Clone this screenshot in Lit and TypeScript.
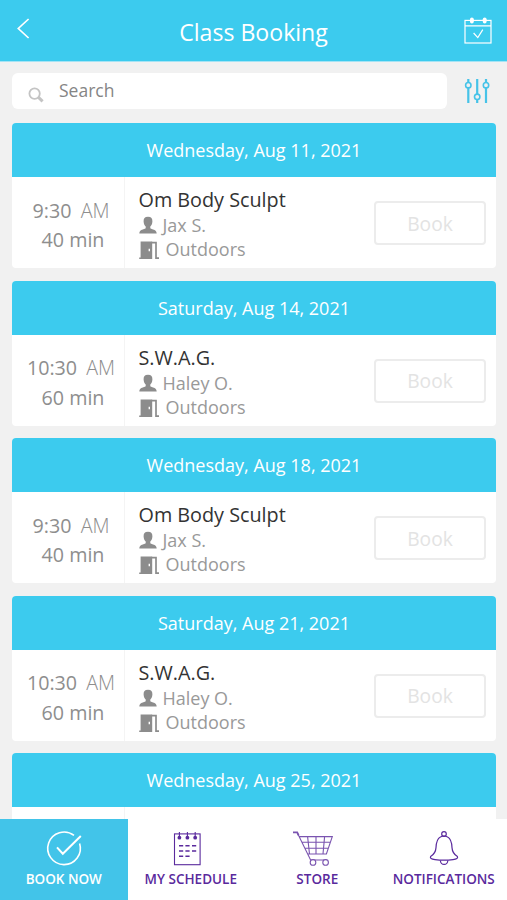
import { LitElement, html, css, svg, nothing } from "lit";
import { customElement, property } from "lit/decorators.js";
import { classMap } from "lit/directives/class-map.js";

interface Details {
  time: string;
  mins: number;
  title: string;
  coach: string;
}

interface Session {
  date: string;
  details?: Details;
}

const SCULPT: Details = { time: "9:30", mins: 40, title: "Om Body Sculpt", coach: "Jax S." };
const SWAG: Details = { time: "10:30", mins: 60, title: "S.W.A.G.", coach: "Haley O." };

const SESSIONS: Session[] = [
  { date: "Wednesday, Aug 11, 2021", details: SCULPT },
  { date: "Saturday, Aug 14, 2021", details: SWAG },
  { date: "Wednesday, Aug 18, 2021", details: SCULPT },
  { date: "Saturday, Aug 21, 2021", details: SWAG },
  { date: "Wednesday, Aug 25, 2021" },
];

const bookIcon = svg`<svg width="40" height="38" viewBox="0 0 40 38" fill="none" stroke="currentColor" stroke-width="1.6">
  <path d="M30 6.4A16.3 16.3 0 1 0 35.6 14.4"/><path d="M13 18.3L18.8 24.7L36.8 7" stroke-width="2"/></svg>`;

const scheduleIcon = svg`<svg class="nudge" width="40" height="38" viewBox="0 0 40 38" fill="none" stroke="currentColor" stroke-width="1.1">
  <rect x="7.5" y="4.9" width="25.6" height="30.8"/>
  <path d="M12.4 3v5M20.4 3v5M28.2 3v5"/>
  <g fill="currentColor" stroke="none"><circle cx="12.4" cy="8.7" r="1.9"/><circle cx="20.4" cy="8.7" r="1.9"/><circle cx="28.2" cy="8.7" r="1.9"/></g>
  <path stroke-width="1.4" d="M12 16.8h4.2M18.4 16.8h4.2M25 16.8h4.2M12 22h4.2M18.4 22h4.2M25 22h4.2M12 27.3h4.2M18.4 27.3h4.2"/></svg>`;

const storeIcon = svg`<svg class="nudge" width="42" height="38" viewBox="0 0 42 38" fill="none" stroke="currentColor" stroke-width="1.1" opacity=".8">
  <path stroke-width="1.8" d="M1 3.4h4.2l1.4 3"/>
  <path d="M5.4 4L18.6 31H35M7.6 7.6H40.3L34.4 25H16M10.3 13.2H38.5M13 19.2H36.5M15.6 7.6L17.5 25M24 7.6V25M32.6 7.6L31 25"/>
  <circle cx="21" cy="33.4" r="2.8" fill="#fff"/><circle cx="33.6" cy="33.4" r="2.8" fill="#fff"/></svg>`;

const bellIcon = svg`<svg width="40" height="38" viewBox="0 0 40 38" fill="none" stroke="currentColor" stroke-width="1.2">
  <circle cx="20" cy="5" r="2.3"/>
  <path d="M16.4 8Q20 6 23.6 8C27.4 10 27.8 14 28 18.6C28.3 23.4 30 25.4 33.4 27.6Q34.6 30 29 30.6Q20 31.8 11 30.6Q5.4 30 6.6 27.6C10 25.4 11.7 23.4 12 18.6C12.2 14 12.6 10 16.4 8Z"/>
  <path d="M16.4 31.4A3.7 4 0 0 0 23.8 31.4"/></svg>`;

const TABS = [
  { id: "book", label: "BOOK NOW", icon: bookIcon },
  { id: "schedule", label: "MY SCHEDULE", icon: scheduleIcon },
  { id: "store", label: "STORE", icon: storeIcon },
  { id: "notify", label: "NOTIFICATIONS", icon: bellIcon },
];

@customElement("session-card")
export class SessionCard extends LitElement {
  @property({ attribute: false }) session!: Session;

  static styles = css`
    :host { display: block; flex: none; height: 145px; border-radius: 4px; overflow: hidden; background: #fff; }
    .date { height: 54px; line-height: 54px; text-align: center; background: #3ccbee; color: #fff; font-size: 18px; }
    .body { display: flex; height: 91px; color: #8e8e8e; }
    .when { box-sizing: border-box; width: 113px; padding: 18.6px 0 0 6px; border-right: 1px solid #f4f4f4; text-align: center; font-size: 19.7px; line-height: 29.5px; white-space: nowrap; }
    .ampm { font-weight: 300; margin-left: 4px; }
    .mins { padding-left: 4px; }
    .what { flex: 1; padding: 9.2px 0 0 13.5px; }
    .title { color: #333; font-size: 19.8px; line-height: 27px; white-space: nowrap; }
    .line { display: flex; align-items: center; height: 24px; font-size: 18px; color: #999; }
    .line svg { flex: none; color: #8c8c8c; }
    .door { margin-top: 2px; }
    .coach { margin-left: 6px; }
    .place { margin-left: 7px; }
    .book { box-sizing: border-box; width: 112px; height: 44px; margin: 24px 10px 0 0; padding: 0; border: 2px solid #ececec; border-radius: 4px; background: #fff; color: #e3e3e3; font: 19.2px "Open Sans", sans-serif; }
  `;

  private renderDetails(d: Details) {
    return html`
      <div class="what">
        <div class="title">${d.title}</div>
        <div class="line">
          <svg width="18" height="18" viewBox="0 0 18 18" fill="currentColor"><path d="M9 .8C5.7 .8 4.4 2.6 4.6 5.4C4.7 8 5.8 9.6 6.7 10.6V12.2C5 13.6.6 13.2.3 17.4H17.7C17.4 13.2 13 13.6 11.3 12.2V10.6C12.2 9.6 13.3 8 13.4 5.4C13.6 2.6 12.3.8 9 .8Z"/></svg>
          <span class="coach">${d.coach}</span>
        </div>
        <div class="line">
          <svg class="door" width="20" height="20" viewBox="0 0 20 20" fill="currentColor"><path fill-rule="evenodd" d="M1.6 1.4H13.2V19H.2V17.6H1.6ZM9.6 8.8V11.2H11V8.8Z"/><path d="M12.5 2.6H17V18.2H20" fill="none" stroke="currentColor" stroke-width="1.7"/></svg>
          <span class="place">Outdoors</span>
        </div>
      </div>
      <button class="book">Book</button>`;
  }

  render() {
    const { date, details: d } = this.session;
    return html`
      <div class="date">${date}</div>
      <div class="body">
        <div class="when">
          ${d
            ? html`<div>${d.time} <span class="ampm">AM</span></div><div class="mins">${d.mins} min</div>`
            : nothing}
        </div>
        ${d ? this.renderDetails(d) : nothing}
      </div>`;
  }
}

@customElement("app-root")
export class AppRoot extends LitElement {
  @property() active = "book";

  static styles = css`
    :host { display: flex; flex-direction: column; height: 900px; overflow: hidden; background: #f1f1f1; font-family: "Open Sans", sans-serif; }
    .bar { box-sizing: border-box; flex: none; display: grid; grid-template-columns: 40px 1fr 40px; height: 62px; padding: 0 12px; background: #3ccbee; color: #fff; border-bottom: 1px solid #a5e4f5; }
    .back { margin: 17px 0 0 4px; }
    .heading { margin: 0; text-align: center; font-weight: 400; font-size: 23.1px; line-height: 64px; }
    .calendar { justify-self: end; margin: 16px 3px 0 0; }
    .tools { flex: none; display: flex; align-items: center; height: 36px; margin: 10.5px 0 14.8px; padding: 0 17px 0 12px; }
    .search { display: flex; align-items: center; width: 435px; height: 36px; border-radius: 6px; background: #fff; }
    .glass { margin: 8px 0 0 16px; }
    .hint { margin: 0 0 1px 15px; font-size: 17.5px; color: #858585; }
    .filter { margin-left: auto; color: #46c3e8; }
    .list { flex: 1; min-height: 0; display: flex; flex-direction: column; gap: 12.5px; padding: 0 11px 0 12px; overflow: hidden; }
    .tabs { flex: none; display: grid; grid-template-columns: 127.5px 126.5px 126.5px 126.5px; height: 81px; background: #fff; color: #5a2a9d; }
    .tab { display: flex; flex-direction: column; align-items: center; padding-top: 10px; font-size: 13.5px; font-weight: 600; line-height: 24px; white-space: nowrap; }
    .tab.active { background: #42c4e9; color: #fff; }
    .nudge { margin-right: 8px; }
  `;

  render() {
    return html`
      <header class="bar">
        <svg class="back" width="16" height="24" viewBox="0 0 16 24" fill="none" stroke="#fff" stroke-width="1.7"><path d="M12.6 2L2.3 11.5L12.6 21"/></svg>
        <h1 class="heading">Class Booking</h1>
        <svg class="calendar" width="28" height="29" viewBox="0 0 28 29" fill="none" stroke="#fff" stroke-width="1.2"><rect x="1" y="4.4" width="26" height="22.6"/><path d="M1 9.8H27M9.6 17L13.8 21.6L18.8 13.6"/><g fill="#fff" stroke="none"><rect x="6" y="1.4" width="3.8" height="6" rx="1.9"/><rect x="18.8" y="1.4" width="3.8" height="6" rx="1.9"/></g></svg>
      </header>
      <div class="tools">
        <div class="search">
          <svg class="glass" width="16" height="16" viewBox="0 0 16 16" fill="none" stroke="#c4c4c4"><circle cx="6.6" cy="6.6" r="5.2" stroke-width="1.8"/><path d="M10.5 10.4L14.6 14.4" stroke-width="3"/></svg>
          <span class="hint">Search</span>
        </div>
        <svg class="filter" width="26" height="26" viewBox="0 0 26 26" fill="#f1f1f1" stroke="currentColor" stroke-width="2.2"><path d="M4.3 1V25M13.2 1V25M22 1V25"/><g stroke-width="1.6"><circle cx="4.3" cy="7.2" r="2.7"/><circle cx="13.2" cy="18.8" r="2.7"/><circle cx="22" cy="7.2" r="2.7"/></g></svg>
      </div>
      <main class="list">
        ${SESSIONS.map((s) => html`<session-card .session=${s}></session-card>`)}
      </main>
      <nav class="tabs">
        ${TABS.map((t) => html`<div class=${classMap({ tab: true, active: t.id === this.active })}>${t.icon}<span>${t.label}</span></div>`)}
      </nav>`;
  }
}
